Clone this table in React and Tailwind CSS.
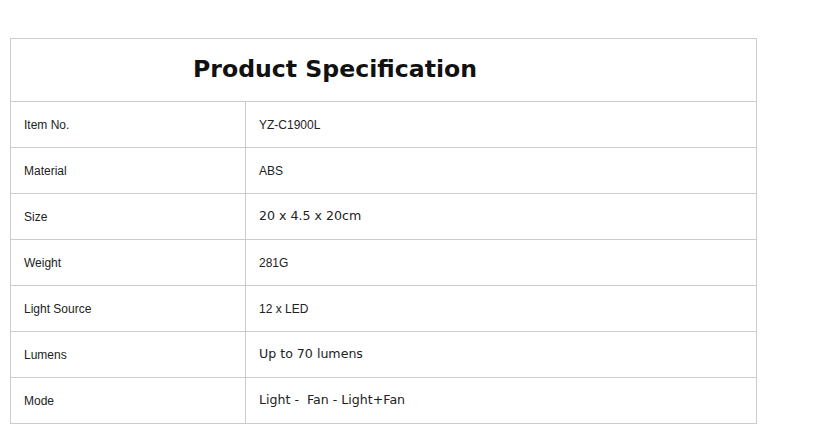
import React from "react";

const rows = [
  ["Item No.", "YZ-C1900L", "a"],
  ["Material", "ABS", "a"],
  ["Size", "20 x 4.5 x 20cm", "v"],
  ["Weight", "281G", "a"],
  ["Light Source", "12 x LED", "a"],
  ["Lumens", "Up to 70 lumens", "v"],
  ["Mode", "Light -  Fan - Light+Fan", "v"],
];

export default function App() {
  return (
    <div className="w-[818px] h-[447px] bg-white overflow-hidden pt-[38px] pl-[10px]">
      <div className="w-[747px] border border-[#cccccc]">
        <div className="h-[62px] flex items-center pl-[182px]">
          <h1 className="text-[23.6px] font-bold text-[#111] [font-family:'DejaVu_Sans',Verdana,sans-serif] leading-none">
            Product Specification
          </h1>
        </div>
        {rows.map(([k, v, f]) => (
          <div key={k} className="h-[46px] border-t border-[#cccccc] flex">
            <div className="w-[234px] flex items-center pl-[13px] text-[12px] text-[#222] [font-family:'Liberation_Sans',Arial,sans-serif]">
              {k}
            </div>
            <div
              className={
                f === "v"
                  ? "flex-1 border-l border-[#cccccc] flex items-center pl-[13px] text-[12.6px] text-[#222] [font-family:'DejaVu_Sans',Verdana,sans-serif] whitespace-pre"
                  : "flex-1 border-l border-[#cccccc] flex items-center pl-[13px] text-[12px] text-[#222] [font-family:'Liberation_Sans',Arial,sans-serif] whitespace-pre"
              }
            >
              {v}
            </div>
          </div>
        ))}
      </div>
    </div>
  );
}
